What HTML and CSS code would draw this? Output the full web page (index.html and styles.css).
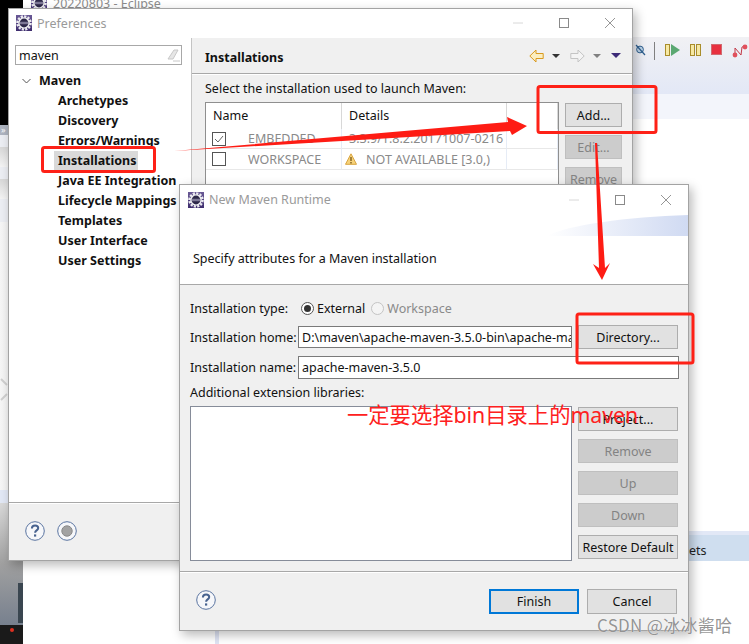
FILE: index.html
```html
<!DOCTYPE html>
<html lang="en">
<head>
<meta charset="utf-8">
<title>New Maven Runtime</title>
<link rel="stylesheet" href="styles.css">
</head>
<body>
<svg class="defs" width="0" height="0" aria-hidden="true">
  <defs>
    <linearGradient id="logoBg" x1="0" y1="0" x2="0" y2="1"><stop offset="0" stop-color="#6a5a96"/><stop offset="1" stop-color="#3e2d6e"/></linearGradient>
    <symbol id="logo" viewBox="0 0 16 16">
      <rect width="16" height="16" fill="url(#logoBg)"/>
      <circle cx="8" cy="8" r="6.6" fill="none" stroke="#ececf0" stroke-width="2.4" stroke-dasharray="2.2 1.25"/>
      <circle cx="8" cy="8" r="5.8" fill="#f2f2f4"/>
      <circle cx="8" cy="8" r="4.4" fill="#2c2748"/>
      <path d="M3.8 7.3h8.4M3.8 8.7h8.4" stroke="#bdb8d2" stroke-width=".7"/>
    </symbol>
    <symbol id="help" viewBox="0 0 20 20">
      <circle cx="10" cy="10" r="9.3" fill="#f6f7fa" stroke="#5a74a0" stroke-width="1"/>
      <path d="M6.9 7.4c0-2 1.4-3 3.2-3 1.8 0 3.1 1 3.1 2.6 0 2.4-3.1 2.4-3.1 4.8" fill="none" stroke="#47628f" stroke-width="2"/>
      <rect x="9" y="13.4" width="2.2" height="2.2" fill="#47628f"/>
    </symbol>
    <symbol id="win-min" viewBox="0 0 10 10"><path d="M0 5h10" stroke="#d8d8d8"/></symbol>
    <symbol id="win-max" viewBox="0 0 10 10"><rect x=".5" y=".5" width="9" height="9" fill="none" stroke="#8a8a8a"/></symbol>
    <symbol id="win-close" viewBox="0 0 10 10"><path d="M0 0l10 10M10 0L0 10" stroke="#8a8a8a" stroke-width=".9"/></symbol>
  </defs>
</svg>

<div class="desktop">
  <div class="bg-black"></div>
  <div class="bg-left">
    <div class="bg-left-tools">
      <span class="chev">»</span>
      <span class="tool-row"></span>
      <span class="tool-row"></span>
    </div>
    <div class="bg-left-view">
      <svg class="sash" width="8" height="30" viewBox="0 0 8 30"><path d="M1 3l6 6M1 24l6-6" stroke="#d0d0d0" stroke-width="2"/></svg>
    </div>
    <div class="bg-left-tab"></div>
    <div class="bg-left-photo"></div>
    <div class="bg-left-dark"><span class="dot"></span></div>
  </div>

  <div class="eclipse-title">
    <svg class="ico16"><use href="#logo"/></svg>
    <span>20220803 - Eclipse</span>
  </div>

  <div class="toolbar">
    <svg width="11" height="12" viewBox="0 0 11 12"><circle cx="5" cy="5.5" r="3.4" fill="#bcd3e8" stroke="#2e5f8f"/><path d="M1 1l9 10" stroke="#2e5f8f" stroke-width="1.2"/></svg>
    <i class="tool-sep"></i>
    <svg width="15" height="12" viewBox="0 0 15 12"><rect x=".5" y=".5" width="4" height="11" fill="#f7e9a4" stroke="#a98d2c"/><path d="M6 0l9 6-9 6z" fill="#5aa872"/></svg>
    <svg width="11" height="12" viewBox="0 0 11 12"><rect x=".5" y=".5" width="4" height="11" fill="#f7e9a4" stroke="#a98d2c"/><rect x="6.5" y=".5" width="4" height="11" fill="#f7e9a4" stroke="#a98d2c"/></svg>
    <svg width="11" height="11" viewBox="0 0 11 11"><rect x=".5" y=".5" width="10" height="10" fill="#e8303f" stroke="#d06a70"/></svg>
    <svg width="16" height="14" viewBox="0 0 16 14"><path d="M3 11V4l6 7 1-8 3-1" fill="none" stroke="#c23a48"/><circle cx="3" cy="11" r="2.4" fill="#e0505c"/><circle cx="13" cy="3" r="2.4" fill="#e0505c"/></svg>
  </div>
  <div class="band-lavender"></div>
  <div class="band-pale"></div>
  <div class="band-tab"><span>ets</span></div>
  <div class="bottom-strip"></div>

  <section class="win win-pref">
    <header class="titlebar">
      <svg class="ico16"><use href="#logo"/></svg>
      <span class="win-title">Preferences</span>
      <div class="win-ctrls">
        <svg class="ico10"><use href="#win-min"/></svg>
        <svg class="ico10"><use href="#win-max"/></svg>
        <svg class="ico10"><use href="#win-close"/></svg>
      </div>
    </header>
    <div class="pref-main">
      <aside class="tree-pane">
        <div class="search">
          <span>maven</span>
          <svg width="14" height="14" viewBox="0 0 14 14"><path d="M2 11l6-9h4l-5 9z" fill="#e6e6e6" stroke="#c8c8c8"/><path d="M7 13h7" stroke="#c8c8c8"/></svg>
        </div>
        <ul class="tree">
          <li class="tree-root">
            <svg width="9" height="6" viewBox="0 0 9 6"><path d="M.5 1L4.5 5l4-4" fill="none" stroke="#555"/></svg>
            <span>Maven</span>
          </li>
          <li class="tree-item">Archetypes</li>
          <li class="tree-item">Discovery</li>
          <li class="tree-item">Errors/Warnings</li>
          <li class="tree-item"><span class="tree-sel">Installations</span></li>
          <li class="tree-item">Java EE Integration</li>
          <li class="tree-item">Lifecycle Mappings</li>
          <li class="tree-item">Templates</li>
          <li class="tree-item">User Interface</li>
          <li class="tree-item">User Settings</li>
        </ul>
      </aside>
      <div class="content-pane">
        <div class="content-head">
          <h2>Installations</h2>
          <div class="nav-icons">
            <svg width="15" height="14" viewBox="0 0 15 14"><path d="M.8 7L7 1v3.5h7.2v5H7V13z" fill="#fbeec0" stroke="#d99a1f"/></svg>
            <i class="dd dd-dark"></i>
            <svg class="nav-fwd" width="15" height="14" viewBox="0 0 15 14"><path d="M14.2 7L8 1v3.5H.8v5H8V13z" fill="#f4f4f4" stroke="#c4c4c4"/></svg>
            <i class="dd dd-grey"></i>
            <i class="dd dd-purple"></i>
          </div>
        </div>
        <div class="content-body">
          <p class="lead">Select the installation used to launch Maven:</p>
          <div class="install-row">
            <div class="table">
              <div class="cell cell-head">Name</div>
              <div class="cell cell-head">Details</div>
              <div class="cell cell-head"></div>
              <div class="cell cell-name">
                <svg class="check" width="14" height="14" viewBox="0 0 14 14"><rect x=".5" y=".5" width="13" height="13" fill="#fff" stroke="#555"/><path d="M3 7l3 3 5-6" fill="none" stroke="#666"/></svg>
                <span>EMBEDDED</span>
              </div>
              <div class="cell cell-dim">3.3.9/1.8.2.20171007-0216</div>
              <div class="cell"></div>
              <div class="cell cell-name">
                <svg class="check" width="14" height="14" viewBox="0 0 14 14"><rect x=".5" y=".5" width="13" height="13" fill="#fff" stroke="#555"/></svg>
                <span>WORKSPACE</span>
              </div>
              <div class="cell cell-dim cell-warn">
                <svg width="12" height="12" viewBox="0 0 12 12"><path d="M6 .8L11.5 11.3H.5z" fill="#f6d27a" stroke="#d8a440"/><path d="M6 4v4M6 9v1.4" stroke="#6a4a10" stroke-width="1.2"/></svg>
                <span>NOT AVAILABLE [3.0,)</span>
              </div>
              <div class="cell"></div>
            </div>
            <div class="btn-col btn-col-pref">
              <button class="btn btn-small">Add...</button>
              <button class="btn btn-small" disabled>Edit...</button>
              <button class="btn btn-small" disabled>Remove</button>
            </div>
          </div>
        </div>
      </div>
    </div>
    <footer class="pref-foot">
      <svg class="ico20"><use href="#help"/></svg>
      <svg class="ico20" viewBox="0 0 20 20"><circle cx="10" cy="10" r="9.3" fill="#f6f7fa" stroke="#5a74a0"/><circle cx="10" cy="10" r="5.2" fill="#a2a2a2" stroke="#8a8a8a"/></svg>
    </footer>
  </section>

  <section class="win win-runtime">
    <header class="titlebar">
      <svg class="ico16"><use href="#logo"/></svg>
      <span class="win-title">New Maven Runtime</span>
      <div class="win-ctrls">
        <svg class="ico10"><use href="#win-min"/></svg>
        <svg class="ico10"><use href="#win-max"/></svg>
        <svg class="ico10"><use href="#win-close"/></svg>
      </div>
    </header>
    <div class="banner">
      <svg class="swoosh" width="141" height="21" viewBox="0 0 141 21">
        <defs><linearGradient id="sw" x1="0" y1="0" x2="1" y2="0"><stop offset="0" stop-color="#fff"/><stop offset="1" stop-color="#d0daf2"/></linearGradient></defs>
        <path d="M0 21C20 10 80 2 141 0v21z" fill="url(#sw)"/>
      </svg>
      <p>Specify attributes for a Maven installation</p>
    </div>
    <div class="runtime-body">
      <div class="field-grid">
        <label class="flabel row-type">Installation type:</label>
        <div class="radios">
          <span class="radio radio-on"></span><span class="radio-text">External</span>
          <span class="radio radio-off"></span><span class="radio-text radio-text-off">Workspace</span>
        </div>
        <label class="flabel">Installation home:</label>
        <div class="home-row">
          <div class="input input-home">D:\maven\apache-maven-3.5.0-bin\apache-maven-3.5.0</div>
          <button class="btn btn-wide">Directory...</button>
        </div>
        <label class="flabel">Installation name:</label>
        <div class="input input-name">apache-maven-3.5.0</div>
      </div>
      <div class="libs-label">Additional extension libraries:</div>
      <div class="libs-row">
        <div class="libs-list"></div>
        <div class="btn-col btn-col-runtime">
          <button class="btn btn-wide">Project...</button>
          <button class="btn btn-wide" disabled>Remove</button>
          <button class="btn btn-wide" disabled>Up</button>
          <button class="btn btn-wide" disabled>Down</button>
          <button class="btn btn-wide">Restore Default</button>
        </div>
      </div>
    </div>
    <footer class="runtime-foot">
      <svg class="ico20 help-up"><use href="#help"/></svg>
      <div class="foot-btns">
        <button class="btn btn-foot btn-default">Finish</button>
        <button class="btn btn-foot">Cancel</button>
      </div>
    </footer>
  </section>

  <svg class="marks" width="749" height="644" viewBox="0 0 749 644" aria-hidden="true">
    <rect x="42.5" y="147.5" width="112" height="24" rx="2" fill="none" stroke="#fe2117" stroke-width="3"/>
    <rect x="538" y="86.5" width="118" height="46" rx="2" fill="none" stroke="#fe2117" stroke-width="3"/>
    <rect x="577" y="314" width="116" height="49" rx="2" fill="none" stroke="#fe2117" stroke-width="3"/>
    <polygon points="174,151 508,122 507,117 527,126 512,135 510,131" fill="#fe1c14"/>
    <polygon points="595,143 597,143 605,268 610,263 602,280 593,264 599,268" fill="#fe1c14"/>
  </svg>
  <div class="note">一定要选择bin目录上的maven</div>
  <div class="watermark">CSDN @冰冰酱哈</div>
</div>
</body>
</html>
```

FILE: styles.css
```css
* { box-sizing: border-box; }
html, body { margin: 0; padding: 0; }
body { width: 749px; height: 644px; overflow: hidden; background: #fff; }
.defs { position: absolute; }
.desktop {
  position: relative;
  width: 749px;
  height: 644px;
  overflow: hidden;
  background: #fff;
  font: 12.5px/1.2 "Noto Sans", "Noto Sans CJK SC", sans-serif;
  color: #111;
}
.ico16 { width: 16px; height: 16px; flex: none; }
.ico10 { width: 10px; height: 10px; flex: none; }
.ico20 { width: 20px; height: 20px; flex: none; }

/* background desktop */
.bg-black { position: absolute; left: 0; top: 0; width: 23px; height: 125px; background: #000; }
.bg-left { position: absolute; left: 0; top: 125px; width: 23px; height: 519px; display: flex; flex-direction: column; background: #f0f0f0; }
.bg-left-tools { height: 97px; background: #eceef3; display: flex; flex-direction: column; }
.chev { height: 10px; font-size: 9px; line-height: 10px; background: #aeb4c0; color: #fff; padding-left: 1px; }
.tool-row { height: 20px; margin-top: 12px; background: linear-gradient(#d8d8d8, #f4f4f4); }
.bg-left-view { height: 268px; padding-top: 154px; background: linear-gradient(90deg, #f6f6f6, #ececec); }
.sash { display: block; }
.bg-left-tab { height: 13px; background: #e2e8f5; }
.bg-left-photo { height: 122px; position: relative; background: linear-gradient(#d9d9d9, #a0a0a0 50%, #77808e); }
.bg-left-photo::after { content: ""; position: absolute; right: 0; bottom: 2px; width: 5px; height: 40px; background: #3a4650; }
.bg-left-dark { flex: 1; background: #1a1a1a; position: relative; }
.dot { position: absolute; left: 10px; top: 3px; width: 4px; height: 4px; border-radius: 50%; background: #e03020; }

.eclipse-title { position: absolute; left: 31px; top: -5px; display: flex; align-items: center; gap: 6px; font-size: 12.5px; color: #8c8c8c; }
.toolbar {
  position: absolute; left: 633px; top: 37px; width: 116px; height: 56px;
  padding: 6px 0 0 2px;
  display: flex; align-items: flex-start; gap: 10px;
  background: linear-gradient(#f1f1f4, #e3e8f6);
}
.toolbar svg { flex: none; margin-top: 1px; }
.tool-sep { width: 1px; height: 18px; background: #808080; margin: -1px 0 0 -2px; flex: none; }
.band-lavender { position: absolute; left: 633px; top: 93px; width: 116px; height: 1px; background: #e3e8f6; }
.band-pale { position: absolute; left: 633px; top: 94px; width: 116px; height: 25px; background: #f3f5fb; }
.band-tab { position: absolute; left: 633px; top: 531px; width: 116px; height: 30px; background: #cfdeef; border-top: 4px solid #e2e8f6; padding: 8px 0 0 56px; font-size: 12.5px; color: #222; }
.bottom-strip { position: absolute; left: 215px; top: 625px; width: 4px; height: 19px; background: #dfe4f4; }

/* windows */
.win {
  position: absolute;
  display: flex;
  flex-direction: column;
  background: #fff;
  border: 1px solid #a3a3a3;
  box-shadow: 3px 4px 10px rgba(0, 0, 0, .28);
}
.win-pref { left: 8px; top: 8px; width: 625px; height: 553px; }
.win-runtime { left: 179px; top: 184px; width: 510px; height: 447px; }
.titlebar { height: 29px; flex: none; display: flex; align-items: center; padding-left: 8px; background: #fff; }
.win-pref .titlebar { padding-left: 7px; padding-bottom: 1px; }
.win-title { margin-left: 5px; color: #9a9a9a; font-size: 12.5px; }
.win-ctrls { margin-left: auto; display: flex; gap: 36px; padding-right: 17px; }

/* preferences */
.pref-main { flex: 1; min-height: 0; display: flex; }
.tree-pane { width: 183px; flex: none; padding: 7px 0 0 6px; background: #fff; border-right: 1px solid #c4c4c4; }
.search { width: 167px; height: 20px; border: 1px solid #a8a8a8; display: flex; align-items: center; justify-content: space-between; padding: 0 0 0 3px; }
.search svg { margin-right: 1px; }
.tree { list-style: none; margin: 6px 0 0; padding: 0; font-weight: 700; }
.tree li { height: 20px; line-height: 20px; white-space: nowrap; }
.tree-root { display: flex; align-items: center; padding-left: 7px; gap: 8px; }
.tree-item { padding-left: 43px; }
.tree-sel { display: inline-block; background: #d9d9d9; margin-left: -4px; padding: 0 4px; width: 84px; }
.content-pane { flex: 1; display: flex; flex-direction: column; background: #f0f0f0; }
.content-head { height: 36px; flex: none; padding: 0 11px 0 13px; display: flex; align-items: center; justify-content: space-between; border-bottom: 1px solid #a8a8a8; }
.content-head h2 { margin: 3px 0 0; font-size: 12.5px; font-weight: 700; }
.nav-icons { display: flex; align-items: center; }
.dd { width: 0; height: 0; border-left: 4px solid transparent; border-right: 4px solid transparent; border-top: 4px solid #333; margin-left: 8px; }
.dd-grey { border-top-color: #808080; }
.dd-purple { border-left-width: 5px; border-right-width: 5px; border-top: 5px solid #3d2a78; margin-left: 10px; }
.nav-fwd { margin-left: 10px; }
.content-body { flex: 1; padding: 1px 0 0 13px; border-top: 1px solid #fff; }
.lead { margin: 0; height: 26px; line-height: 25px; }
.install-row { display: flex; gap: 5px; align-items: flex-start; }
.table {
  width: 354px; height: 380px;
  margin-right: 1px;
  background: #fff; border: 1px solid #8f8f8f;
  display: grid;
  grid-template-columns: 136px 165px 1fr;
  grid-template-rows: 26px 20px 21px 1fr;
  align-content: start;
}
.cell { display: flex; align-items: center; border-right: 1px solid #e6ecf6; border-bottom: 1px solid #e8e8e8; padding-left: 7px; white-space: nowrap; overflow: hidden; }
.cell-head { border-right-color: #d8d8d8; border-bottom: none; padding-bottom: 2px; }
.cell-name { color: #8a8a8a; gap: 22px; padding-left: 6px; }
.cell-dim { color: #8a8a8a; }
.cell-warn { gap: 9px; padding-left: 3px; }
.check { flex: none; }
.btn-col { display: flex; flex-direction: column; }
.btn-col-pref { gap: 8px; padding-top: 1px; }
.btn-col-runtime { gap: 8px; padding-top: 1px; }
.btn {
  font: inherit; color: #111;
  background: #e1e1e1;
  border: 1px solid #adadad;
  padding: 0;
  white-space: nowrap;
}
.btn:disabled { background: #ccc; border-color: #bfbfbf; color: #838383; }
.btn-small { width: 57px; height: 24px; }
.btn-wide { width: 100px; height: 24px; flex: none; }
.btn-foot { width: 90px; height: 25px; }
.btn-default { border: 2px solid #0078d7; }

/* runtime */
.banner { height: 70px; flex: none; position: relative; background: #fff; }
.banner p { margin: 0; position: absolute; left: 13px; top: 37px; }
.swoosh { position: absolute; right: 0; top: 1px; }
.runtime-body { flex: 1; min-height: 0; background: #f0f0f0; border-top: 1px solid #a8a8a8; padding: 0 0 0 10px; display: flex; flex-direction: column; }
.field-grid { display: grid; grid-template-columns: 108px 381px; grid-template-rows: 21px 24px 23px; row-gap: 7px; padding-top: 12px; align-items: center; }
.flabel { white-space: nowrap; }
.row-type { padding-top: 2px; }
.radios { display: flex; align-items: center; padding: 2px 0 0 3px; }
.radio { width: 13px; height: 13px; border-radius: 50%; border: 1px solid #555; background: #fff; display: block; flex: none; position: relative; }
.radio-on::after { content: ""; position: absolute; left: 2px; top: 2px; width: 7px; height: 7px; border-radius: 50%; background: #333; }
.radio-off { border-color: #c4c4c4; background: #f4f4f4; margin-left: 6px; }
.radio-text { margin-left: 3px; }
.radio-text-off { color: #8a8a8a; }
.home-row { display: flex; gap: 6px; align-items: center; }
.input { height: 22px; background: #fff; border: 1px solid #7a7a7a; line-height: 22px; padding-left: 3px; white-space: nowrap; overflow: hidden; }
.input-home { width: 274px; }
.input-name { width: 381px; height: 23px; }
.libs-label { margin-top: 5px; height: 18px; line-height: 18px; }
.libs-row { display: flex; gap: 6px; align-items: flex-start; margin-top: 4px; }
.libs-list { width: 382px; height: 155px; background: #fff; border: 1px solid #868c99; }
.runtime-foot { height: 59px; flex: none; background: #f0f0f0; border-top: 1px solid #a8a8a8; box-shadow: inset 0 1px 0 #fff; padding: 0 11px 0 16px; display: flex; align-items: center; justify-content: space-between; }
.help-up { margin-bottom: 2px; }
.foot-btns { display: flex; gap: 8px; }
.pref-foot { height: 58px; flex: none; background: #f0f0f0; border-top: 1px solid #a8a8a8; box-shadow: inset 0 1px 0 #fff; padding: 0 0 2px 16px; display: flex; align-items: center; gap: 12px; }

/* annotations */
.marks { position: absolute; left: 0; top: 0; pointer-events: none; }
.note { position: absolute; left: 347px; top: 402px; font: 21.3px/26px "Noto Sans", "Noto Sans CJK SC", sans-serif; color: #fe2020; white-space: nowrap; }
.watermark { position: absolute; left: 597px; top: 614px; font: 17px/22px "Noto Sans CJK SC", sans-serif; letter-spacing: .3px; color: rgba(120, 120, 120, .8); text-shadow: 0 0 1px #fff; white-space: nowrap; }
```
